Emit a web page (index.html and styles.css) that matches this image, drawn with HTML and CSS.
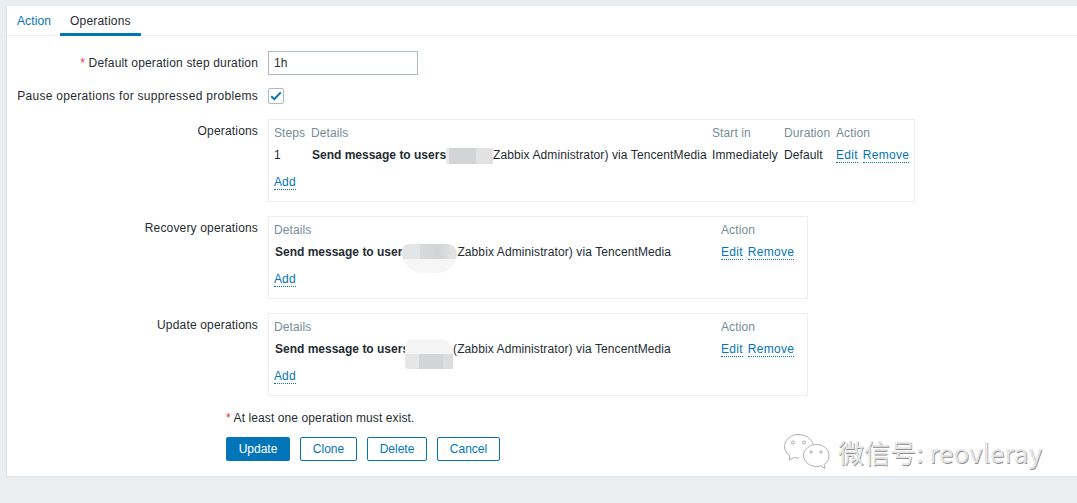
FILE: index.html
```html
<!DOCTYPE html>
<html lang="en">
<head>
<meta charset="utf-8">
<title>Action</title>
<link rel="stylesheet" href="styles.css">
</head>
<body>
<main class="card">
  <nav class="tabs">
    <a class="tab">Action</a>
    <a class="tab tab-active">Operations</a>
  </nav>
  <form class="form">
    <div class="row row-duration">
      <label class="label"><span class="req">*</span> Default operation step duration</label>
      <input class="input" type="text" value="1h">
    </div>
    <div class="row row-pause">
      <label class="label label-pause">Pause operations for suppressed problems</label>
      <span class="check">
        <svg width="12" height="10" viewBox="0 0 12 10"><path d="M1.200 5.200 4.300 8.200 10.800 1.400" fill="none" stroke="#0275b8" stroke-width="2"/></svg>
      </span>
    </div>
    <div class="row row-op">
      <span class="label">Operations</span>
      <div class="box box-wide">
        <div class="grid grid-steps">
          <span class="th">Steps</span><span class="th">Details</span><span class="th">Start in</span><span class="th">Duration</span><span class="th">Action</span>
          <span class="td">1</span>
          <span class="td detail"><b>Send message to users</b><i class="redact redact-a"></i>Zabbix Administrator) via TencentMedia</span>
          <span class="td">Immediately</span>
          <span class="td">Default</span>
          <span class="td actions"><a class="link">Edit</a><a class="link">Remove</a></span>
        </div>
        <a class="link add">Add</a>
      </div>
    </div>
    <div class="row row-op">
      <span class="label">Recovery operations</span>
      <div class="box box-narrow">
        <div class="grid grid-plain">
          <span class="th">Details</span><span class="th">Action</span>
          <span class="td detail"><b>Send message to user</b><i class="redact redact-b"></i>Zabbix Administrator) via TencentMedia</span>
          <span class="td actions"><a class="link">Edit</a><a class="link">Remove</a></span>
        </div>
        <a class="link add">Add</a>
      </div>
    </div>
    <div class="row row-op">
      <span class="label">Update operations</span>
      <div class="box box-narrow">
        <div class="grid grid-plain">
          <span class="th">Details</span><span class="th">Action</span>
          <span class="td detail"><b>Send message to users</b><i class="redact redact-c"></i>(Zabbix Administrator) via TencentMedia</span>
          <span class="td actions"><a class="link">Edit</a><a class="link">Remove</a></span>
        </div>
        <a class="link add">Add</a>
      </div>
    </div>
    <p class="note"><span class="req">*</span> At least one operation must exist.</p>
    <div class="buttons">
      <button class="btn btn-primary" type="button">Update</button>
      <button class="btn btn-clone" type="button">Clone</button>
      <button class="btn btn-delete" type="button">Delete</button>
      <button class="btn btn-cancel" type="button">Cancel</button>
    </div>
  </form>
  <div class="watermark">
    <svg width="48" height="40" viewBox="0 0 48 40" fill="none" stroke="#9a9a9a" stroke-width="0.8">
      <path d="M30 12C28 6 22 2.500 15 2.500 7.500 2.500 1.500 8 1.500 14.500c0 4 2 7 5.500 9.500l-1 4 5-2.500c1.500.4 3 .6 5 .6"/>
      <circle cx="10" cy="10.500" r="1.500"/><circle cx="21" cy="10.500" r="1.500"/>
      <path d="M46 23.500C46 17 40 12.500 33.500 12.500S20.500 17.500 20.500 23.500 26.500 34.500 33.500 34.500c1.800 0 3-.2 4.500-.7l4 2.700-1-4c3.500-2 5-5.200 5-8.500Z"/>
      <circle cx="28" cy="20" r="1.200"/><circle cx="38" cy="20" r="1.200"/>
    </svg>
    <span class="wm-text">微信号: reovleray</span>
  </div>
</main>
</body>
</html>
```
FILE: styles.css
```css
* { box-sizing: border-box; }
html, body { height: 100%; }
body {
  margin: 0;
  padding: 5px 0 27px 6px;
  background: #ebeef0;
  font: 12px/14px "Liberation Sans", Arial, sans-serif;
  letter-spacing: 0.1px;
  color: #1f2c33;
  overflow: hidden;
}
.card {
  position: relative;
  height: 472px;
  background: #fff;
  border: 1px solid #dfe4e7;
  border-right: 0;
  border-top-color: #e6eaec;
}
.tabs {
  display: flex;
  height: 30px;
  border-bottom: 1px solid #ebeef0;
}
.tab {
  height: 30px;
  padding: 8px 10px 0;
  color: #0275b8;
}
.tab:first-child { width: 53px; }
.tab-active {
  width: 81px;
  color: #1f2c33;
  letter-spacing: 0.2px;
  border-bottom: 3px solid #0275b8;
}
.form { padding-top: 15px; }
.row {
  display: grid;
  grid-template-columns: 251px 1fr;
  column-gap: 10px;
  align-items: start;
}
.label { text-align: right; white-space: nowrap; letter-spacing: 0.17px; }
.label-pause { letter-spacing: 0.3px; }
.row-duration { align-items: center; height: 24px; }
.row-pause { align-items: center; height: 16px; margin-top: 13px; }
.row-op { margin-top: 15px; }
.row-op .label { padding-top: 5px; }
.row-op:nth-child(n+4) { margin-top: 14px; }
.req { color: #e33734; }
.input {
  width: 150px;
  height: 24px;
  padding: 0 5px;
  border: 1px solid #acbbc2;
  background: #fff;
  font: inherit;
  color: inherit;
}
.check {
  display: flex;
  align-items: center;
  justify-content: center;
  width: 16px;
  height: 16px;
  border: 1px solid #acbbc2;
  border-radius: 2px;
}
.box {
  height: 83px;
  padding: 6px 5px 0;
  border: 1px solid #ebeef0;
}
.box-wide { width: 647px; }
.box-narrow { width: 540px; }
.grid { display: grid; align-items: start; }
.grid-steps { grid-template-columns: 37px 401px 72px 52px 1fr; }
.grid-plain { grid-template-columns: 447px 1fr; }
.th { color: #768d99; height: 22px; }
.td { height: 27px; white-space: nowrap; }
.detail { padding-left: 1px; }
.detail b { letter-spacing: 0; }
.redact {
  display: inline-block;
  vertical-align: middle;
  margin-block: -12px;
}
.redact-a {
  width: 47px;
  height: 16px;
  background: linear-gradient(90deg, #e9e9ea 3px, #d3d4d6 3px, #d3d4d6 30px, #e2e2e4 30px);
}
.redact-b {
  width: 55px;
  height: 29px;
  position: relative;
  top: 6px;
  border-radius: 8px 12px 24px 26px;
  background:
    linear-gradient(180deg, transparent 15px, #f6f6f6 15px),
    linear-gradient(90deg, #e4e5e6 18px, #d9dadb 18px, #d3d4d6 36px, #e2e2e4 50px);
}
.redact-c {
  width: 48px;
  height: 30px;
  margin-left: -4px;
  position: relative;
  top: 4px;
  border-radius: 6px 14px 0 4px;
  background:
    linear-gradient(180deg, #f5f5f6 15px, transparent 15px),
    linear-gradient(90deg, #e6e6e7 14px, #d3d4d6 14px, #d3d4d6 38px, #dcdcde 38px);
}
.link {
  display: inline-block;
  color: #0275b8;
  border-bottom: 1px dotted #0275b8;
  line-height: 14px;
}
.actions { display: flex; align-items: flex-start; gap: 5px; letter-spacing: 0.28px; }
.note { margin: 15px 0 0 219px; }
.buttons { display: flex; gap: 10px; margin: 12px 0 0 219px; }
.btn {
  height: 24px;
  padding: 0;
  border: 1px solid #0275b8;
  border-radius: 2px;
  background: #fff;
  color: #0275b8;
  font: inherit;
}
.btn-primary { width: 64px; background: #0275b8; color: #fff; }
.btn-clone { width: 57px; }
.btn-delete { width: 60px; }
.btn-cancel { width: 63px; }
.watermark {
  position: absolute;
  right: 35px;
  bottom: 4px;
  display: flex;
  align-items: center;
  gap: 7px;
}
.wm-text {
  font: 26px/32px "Noto Sans CJK SC", "Liberation Sans", sans-serif;
  letter-spacing: 0;
  color: #e6e6e6;
  text-shadow: 0.7px 0.7px 0 #8c8c8c;
  white-space: nowrap;
}
```
